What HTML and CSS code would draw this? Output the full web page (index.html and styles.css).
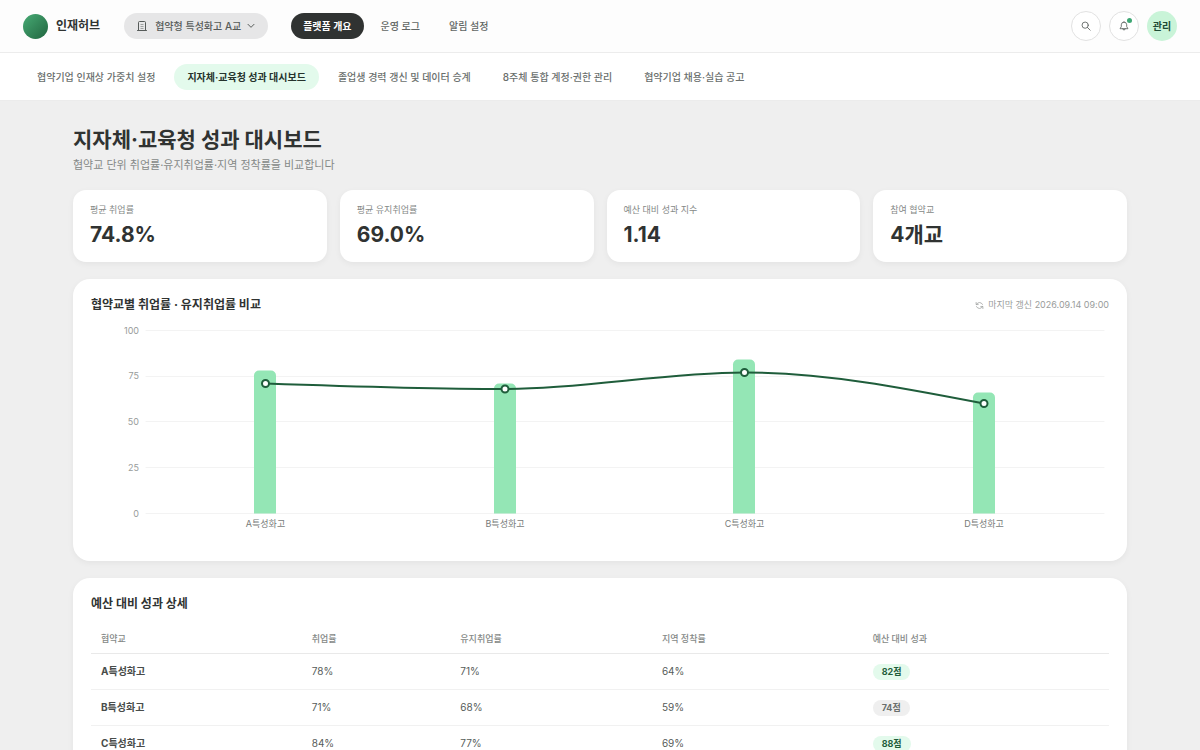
FILE: index.html
```html
<!DOCTYPE html>
<html lang="ko">
<head>
<meta charset="utf-8">
<meta name="viewport" content="width=device-width, initial-scale=1">
<title>인재허브</title>
<link rel="stylesheet" href="styles.css">
</head>
<body>
<header class="topbar">
  <a class="brand" href="#"><span class="brand-mark"></span>인재허브</a>
  <label class="school-picker" aria-label="학교 선택">
    <svg class="icon-building" viewBox="0 0 10 10" aria-hidden="true"><path d="M1.500 9.500V1.500a1 1 0 0 1 1-1h5a1 1 0 0 1 1 1v8M.500 9.500h9"/><path class="windows" d="M3.500 3.500h3M3.500 5.500h3M3.500 7.500h3"/></svg>
    <select class="school-select"><option>협약형 특성화고 A교</option></select>
    <svg class="icon-chevron" viewBox="0 0 24 24" aria-hidden="true"><path d="M3 7l9 9 9-9"/></svg>
  </label>
  <nav class="main-nav">
    <a class="main-link is-active" href="#">플랫폼 개요</a>
    <a class="main-link" href="#">운영 로그</a>
    <a class="main-link" href="#">알림 설정</a>
  </nav>
  <div class="actions">
    <button class="round-button" type="button" aria-label="검색">
      <svg class="icon-action" viewBox="0 0 24 24" aria-hidden="true"><circle cx="10" cy="10" r="7.500"/><path d="M15.500 15.500L22 22"/></svg>
    </button>
    <button class="round-button" type="button" aria-label="알림">
      <svg class="icon-action" viewBox="0 0 24 24" aria-hidden="true"><path d="M12 2.500a6.500 6.500 0 0 0-6.500 6.500v4.500L2.500 18.500h19l-3-5V9A6.500 6.500 0 0 0 12 2.500zM9 18.500a3 3 0 0 0 6 0"/></svg>
      <span class="alert-dot"></span>
    </button>
    <button class="avatar" type="button">관리</button>
  </div>
</header>
<nav class="sub-nav">
  <a class="sub-link" href="#">협약기업 인재상 가중치 설정</a>
  <a class="sub-link is-active" href="#">지자체·교육청 성과 대시보드</a>
  <a class="sub-link" href="#">졸업생 경력 갱신 및 데이터 승계</a>
  <a class="sub-link" href="#">8주체 통합 계정·권한 관리</a>
  <a class="sub-link" href="#">협약기업 채용·실습 공고</a>
</nav>
<main class="page">
  <div class="page-head">
    <h1 class="page-title">지자체·교육청 성과 대시보드</h1>
    <p class="page-desc">협약교 단위 취업률·유지취업률·지역 정착률을 비교합니다</p>
  </div>
  <section class="stats">
    <div class="stat"><span class="stat-label">평균 취업률</span><strong class="stat-value">74.8%</strong></div>
    <div class="stat"><span class="stat-label">평균 유지취업률</span><strong class="stat-value">69.0%</strong></div>
    <div class="stat"><span class="stat-label">예산 대비 성과 지수</span><strong class="stat-value">1.14</strong></div>
    <div class="stat"><span class="stat-label">참여 협약교</span><strong class="stat-value">4개교</strong></div>
  </section>
  <section class="panel">
    <div class="panel-head">
      <h2 class="panel-title">협약교별 취업률 · 유지취업률 비교</h2>
      <span class="updated">
        <svg class="icon-refresh" viewBox="0 0 24 24" aria-hidden="true"><path d="M4 9a9 9 0 0 1 16 0M20 15a9 9 0 0 1-16 0M3 4v5.500h5.500M21 20v-5.500h-5.500"/></svg>
        마지막 갱신 2026.09.14 09:00
      </span>
    </div>
    <svg class="chart" viewBox="0 1 1018 230" role="img" aria-label="협약교별 취업률 · 유지취업률 비교">
      <path class="grid" d="M55 18.500H1013M55 64.500H1013M55 109.500H1013M55 155.500H1013M55 201.500H1013"/>
      <g class="tick">
        <text x="48" y="22">100</text>
        <text x="48" y="67">75</text>
        <text x="48" y="113">50</text>
        <text x="48" y="159">25</text>
        <text x="48" y="205">0</text>
      </g>
      <g class="bar">
        <path d="M163 201.500V63.500a5 5 0 0 1 5-5h12a5 5 0 0 1 5 5v138z"/>
        <path d="M403 201.500V76.500a5 5 0 0 1 5-5h12a5 5 0 0 1 5 5v125z"/>
        <path d="M642 201.500V52.500a5 5 0 0 1 5-5h12a5 5 0 0 1 5 5v149z"/>
        <path d="M882 201.500V85.500a5 5 0 0 1 5-5h12a5 5 0 0 1 5 5v116z"/>
      </g>
      <path class="trend" d="M174.500 71.500C254.300 74.300 334.200 77 414 77C493.800 77 573.700 60.500 653.500 60.500C733.300 60.500 813.200 76 893 91.500"/>
      <g class="point">
        <circle cx="174.500" cy="71.500" r="3.500"/>
        <circle cx="414" cy="77" r="3.500"/>
        <circle cx="653.500" cy="60.500" r="3.500"/>
        <circle cx="893" cy="91.500" r="3.500"/>
      </g>
      <g class="category">
        <text x="174.500" y="215">A특성화고</text>
        <text x="414" y="215">B특성화고</text>
        <text x="653.500" y="215">C특성화고</text>
        <text x="893" y="215">D특성화고</text>
      </g>
    </svg>
  </section>
  <section class="panel">
    <h2 class="panel-title">예산 대비 성과 상세</h2>
    <table class="table">
      <colgroup><col class="col-school"><col class="col-rate"><col class="col-kept"><col class="col-local"><col></colgroup>
      <thead>
        <tr><th scope="col">협약교</th><th scope="col">취업률</th><th scope="col">유지취업률</th><th scope="col">지역 정착률</th><th scope="col">예산 대비 성과</th></tr>
      </thead>
      <tbody>
        <tr><th scope="row">A특성화고</th><td>78%</td><td>71%</td><td>64%</td><td><span class="badge badge-good">82점</span></td></tr>
        <tr><th scope="row">B특성화고</th><td>71%</td><td>68%</td><td>59%</td><td><span class="badge">74점</span></td></tr>
        <tr><th scope="row">C특성화고</th><td>84%</td><td>77%</td><td>69%</td><td><span class="badge badge-good">88점</span></td></tr>
      </tbody>
    </table>
  </section>
</main>
</body>
</html>
```
FILE: styles.css
```css
* {
  box-sizing: border-box;
}

body {
  margin: 0;
  background: #efefef;
  color: #303332;
  font-family: Inter, "Noto Sans CJK KR", sans-serif;
  font-size: 10px;
  line-height: 16px;
}

a {
  color: inherit;
  text-decoration: none;
}

button,
select {
  font: inherit;
  color: inherit;
}

svg {
  fill: none;
  stroke: currentColor;
  stroke-width: 2;
  stroke-linecap: round;
  stroke-linejoin: round;
  flex: none;
}

.topbar {
  display: flex;
  align-items: center;
  padding: 11px 23px;
  background: #fdfdfd;
  border-bottom: 1px solid #ececec;
}

.brand {
  display: flex;
  align-items: center;
  gap: 8px;
  font-size: 12px;
  font-weight: 700;
}

.brand-mark {
  width: 25px;
  height: 25px;
  border-radius: 50%;
  background: linear-gradient(135deg, #48ab75, #20653f);
}

.school-picker {
  display: flex;
  align-items: center;
  height: 26px;
  margin-left: 24px;
  padding: 0 13px;
  border-radius: 13px;
  background: #e6e6e7;
  color: #565b59;
  font-weight: 500;
}

.icon-building {
  width: 10px;
  height: 10px;
  stroke-width: 1;
}

.windows {
  stroke-linecap: butt;
  opacity: 0.5;
}

.school-select {
  appearance: none;
  margin: 0 5px 0 8px;
  padding: 0;
  border: 0;
  background: transparent;
}

.icon-chevron {
  width: 8px;
  height: 8px;
  stroke-width: 3;
}

.main-nav {
  display: flex;
  gap: 5px;
  margin-left: 23px;
  color: #616664;
  font-weight: 500;
}

.main-link {
  padding: 5px 12px;
  border-radius: 13px;
}

.main-link.is-active {
  background: #303332;
  color: #fff;
  font-weight: 700;
}

.actions {
  display: flex;
  gap: 8px;
  margin-left: auto;
}

.round-button,
.avatar {
  position: relative;
  display: flex;
  align-items: center;
  justify-content: center;
  width: 30px;
  height: 30px;
  padding: 0;
  border: 1px solid #e2e2e2;
  border-radius: 50%;
  background: #fff;
  color: #565b59;
}

.avatar {
  border: 0;
  background: #c9f4d8;
  color: #1f4a35;
  font-weight: 700;
}

.icon-action {
  width: 10px;
  height: 10px;
}

.alert-dot {
  position: absolute;
  top: 6px;
  right: 6px;
  width: 5px;
  height: 5px;
  border-radius: 50%;
  background: #3da673;
}

.sub-nav {
  display: flex;
  gap: 6px;
  padding: 11px 24px 10px;
  background: #fff;
  border-bottom: 1px solid #ececec;
  color: #6a6f6d;
  font-weight: 500;
}

.sub-link {
  padding: 5px 13px;
  border-radius: 13px;
}

.sub-link.is-active {
  background: #e3faec;
  color: #26332c;
  font-weight: 700;
}

.page {
  display: flex;
  flex-direction: column;
  gap: 17px;
  max-width: 1100px;
  margin: 0 auto;
  padding: 24px 23px;
}

.page-title {
  margin: 0;
  font-size: 21px;
  line-height: 30px;
  font-weight: 700;
}

.page-desc {
  margin: 2px 0 0;
  color: #858987;
  font-size: 11px;
}

.stats {
  display: grid;
  grid-template-columns: repeat(4, 1fr);
  gap: 13px;
}

.stat {
  display: flex;
  flex-direction: column;
  gap: 4px;
  padding: 13px 17px;
  border-radius: 13px;
  background: #fff;
  box-shadow: 0 2px 6px rgba(0, 0, 0, 0.05);
}

.stat-label {
  color: #858987;
  font-size: 9px;
  line-height: 14px;
}

.stat-value {
  font-size: 21px;
  line-height: 28px;
  font-weight: 700;
}

.panel {
  padding: 18px;
  border-radius: 17px;
  background: #fff;
  box-shadow: 0 2px 6px rgba(0, 0, 0, 0.05);
}

.panel-head {
  display: flex;
  align-items: center;
  justify-content: space-between;
}

.panel-title {
  margin: 0;
  font-size: 12px;
  line-height: 16px;
  font-weight: 700;
}

.updated {
  display: flex;
  align-items: center;
  gap: 4px;
  color: #999c9b;
  font-size: 9px;
}

.icon-refresh {
  width: 9px;
  height: 9px;
}

.chart {
  display: block;
  width: 100%;
  height: auto;
}

.chart text {
  stroke: none;
  font-size: 9px;
}

.grid {
  stroke: #f3f3f3;
  stroke-width: 1;
}

.tick {
  fill: #999c9b;
  text-anchor: end;
}

.bar {
  fill: #94e6b5;
  stroke: none;
}

.trend {
  stroke: #1f5d3b;
}

.point {
  fill: #fff;
  stroke: #1f5d3b;
}

.category {
  fill: #777b79;
  text-anchor: middle;
}

.table {
  width: 100%;
  margin-top: 14px;
  border-collapse: collapse;
  table-layout: fixed;
  text-align: left;
}

.col-school {
  width: 20.7%;
}

.col-rate {
  width: 14.6%;
}

.col-kept {
  width: 19.8%;
}

.col-local {
  width: 20.7%;
}

.table th,
.table td {
  height: 36px;
  padding: 0 10px;
  border-bottom: 1px solid #f1f1f1;
  color: #565b59;
}

.table thead th {
  height: 27px;
  border-bottom-color: #e9e9e9;
  color: #858987;
  font-size: 9px;
  font-weight: 500;
}

.table tbody th {
  color: #484c4a;
  font-weight: 700;
}

.badge {
  display: inline-block;
  padding: 0 9px;
  border-radius: 8px;
  background: #efefef;
  color: #6a6f6d;
  font-size: 9px;
  font-weight: 700;
}

.badge-good {
  background: #e3faec;
  color: #1f5d3b;
}
```
